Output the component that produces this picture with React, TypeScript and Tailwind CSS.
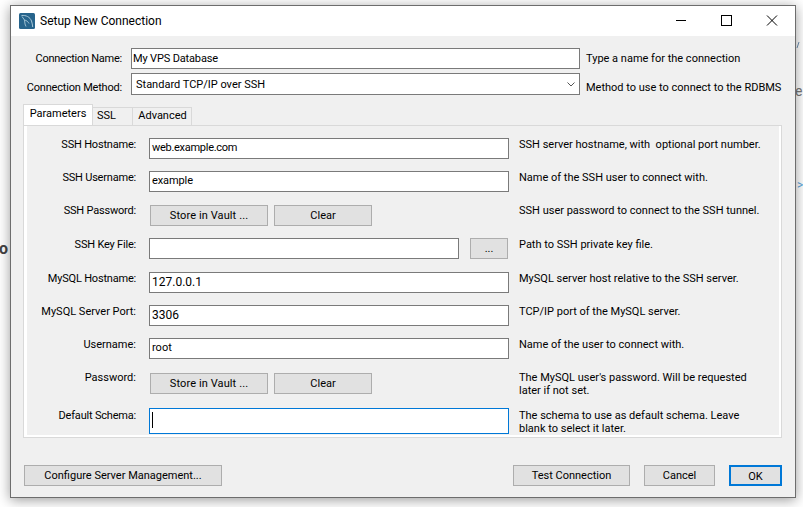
import React from "react";

function Field({ value, className = "pl-px" }: { value?: string; className?: string }) {
  return (
    <div className={`mt-px h-[21px] shrink-0 border border-[#7a7a7a] bg-white leading-[18px] whitespace-nowrap ${className}`}>
      {value}
    </div>
  );
}

function Btn({ children, className = "", border = "border border-[#adadad]" }: { children: React.ReactNode; className?: string; border?: string }) {
  return (
    <div className={`h-[21px] bg-[#e1e1e1] text-center leading-[20px] whitespace-nowrap ${border} ${className}`}>
      {children}
    </div>
  );
}

function Row({ label, help, top, children, labelClass = "tracking-[-0.2px]" }: { label: string; help: React.ReactNode; top: string; children: React.ReactNode; labelClass?: string }) {
  return (
    <div className={`flex items-start ${top}`}>
      <div className={`w-[109px] shrink-0 text-right leading-4 whitespace-nowrap ${labelClass}`}>{label}</div>
      <div className="ml-[13px] w-[360px] shrink-0">{children}</div>
      <div className="ml-[10px] leading-[13px] whitespace-pre pt-px">{help}</div>
    </div>
  );
}

function VaultButtons({ className = "mt-[2px]" }: { className?: string }) {
  return (
    <div className={`flex gap-[6px] pl-px ${className}`}>
      <Btn className="w-[118px] tracking-[0.1px]">Store in Vault ...</Btn>
      <Btn className="w-[98px]">Clear</Btn>
    </div>
  );
}

function Logo() {
  return (
    <svg viewBox="0 0 16 16" className="h-4 w-4 shrink-0">
      <rect width="16" height="16" rx="1.5" fill="#27648c" />
      <path d="M2.500 2.500c4.500-.5 8.500 1.500 10 5.500.6 1.800 1 4 1.200 6" stroke="#a9c8d8" strokeWidth="1" fill="none" />
      <path d="M3 3.500l2.500 3.500L6 11l1 2.500M5.500 7c2 .5 3.500 1.500 4.500 3.500" stroke="#a9c8d8" strokeWidth="0.9" fill="none" />
    </svg>
  );
}

export default function App() {
  return (
    <div className="relative h-[507px] w-[803px] overflow-hidden bg-white pl-[10px] pt-[5px] font-['Roboto',sans-serif] text-[11px] text-[#000]">
      <span className="absolute left-[-1px] top-[239px] text-[16px] font-bold leading-5 text-[#444]">o</span>
      <span className="absolute left-[795px] top-[83px] text-[14px] leading-4 text-[#777]">e</span>
      <span className="absolute left-[797px] top-[177px] text-[12px] leading-4 text-[#5aa5dc]">&gt;</span>
      <svg viewBox="0 0 4 6" className="absolute left-[796px] top-[42px] h-[6px] w-[4px]"><path d="M3 0L1 6" stroke="#6f93b5" /></svg>

      <div className="relative h-[493px] w-[786px] border border-[#6d6d6d] bg-[#f0f0f0] shadow-[0_2px_12px_rgba(0,0,0,0.4)]">
        <div className="flex h-[30px] items-center bg-white pl-[8px]">
          <Logo />
          <span className="ml-[5px] whitespace-nowrap text-[12px] leading-4">Setup New Connection</span>
          <div className="ml-auto flex items-center">
            <svg viewBox="0 0 46 30" className="h-[30px] w-[46px]"><path d="M19 14.500h10" stroke="#000" /></svg>
            <svg viewBox="0 0 46 30" className="h-[30px] w-[46px]"><rect x="18.500" y="9.500" width="10" height="10" fill="none" stroke="#000" /></svg>
            <svg viewBox="0 0 46 30" className="h-[30px] w-[46px]"><path d="M18 9.500l10 10M28 9.500l-10 10" stroke="#000" /></svg>
          </div>
        </div>

        <div className="flex items-start pt-[12px]">
          <div className="w-[111px] shrink-0 pt-[3px] text-right whitespace-nowrap leading-4 tracking-[-0.25px]">Connection Name:</div>
          <div className="ml-[9px] h-[21px] w-[449px] shrink-0 border border-[#7a7a7a] bg-white pl-px leading-[19px] tracking-[-0.15px] whitespace-nowrap">My VPS Database</div>
          <div className="ml-[6px] pt-[3px] whitespace-nowrap leading-4">Type a name for the connection</div>
        </div>

        <div className="mt-[4px] flex items-start">
          <div className="w-[111px] shrink-0 pt-[7px] text-right whitespace-nowrap leading-4 tracking-[-0.2px]">Connection Method:</div>
          <div className="relative ml-[9px] h-[22px] w-[449px] shrink-0 border border-[#7a7a7a] bg-white pl-[4px] leading-[21px]">
            Standard TCP/IP over SSH
            <svg viewBox="0 0 8 5" className="absolute right-[4px] top-[8px] h-[5px] w-[8px]"><path d="M0.500 0.500l3.500 3.500 3.500-3.500" stroke="#555" fill="none" /></svg>
          </div>
          <div className="ml-[6px] pt-[7px] whitespace-nowrap leading-4">Method to use to connect to the RDBMS</div>
        </div>

        <div className="ml-[12px] mt-[8px] flex h-[21px] items-end">
          <div className="relative z-10 flex h-[21px] w-[70px] items-center justify-center border border-b-0 border-[#d9d9d9] bg-white pb-[2px] leading-4">Parameters</div>
          <div className="flex h-[18px] w-[40px] items-center border-r border-t border-[#d9d9d9] pb-[2px] pl-[4px] leading-4">SSL</div>
          <div className="flex h-[18px] w-[59px] items-center justify-center border-r border-t border-[#d9d9d9] pb-[2px] pl-px leading-4">Advanced</div>
        </div>

        <div className="ml-[12px] h-[313px] w-[759px] border border-[#d9d9d9] bg-[#f0f0f0] px-[3px] pt-[11px] shadow-[inset_3px_0_0_#fff,inset_-2px_0_0_#fff,inset_0_-2px_0_#fff]">
          <Row label="SSH Hostname:" help="SSH server hostname, with  optional port number." top="">
            <Field value="web.example.com" className="pl-[2px] tracking-[-0.28px]" />
          </Row>
          <Row label="SSH Username:" help="Name of the SSH user to connect with." top="mt-[11px]">
            <Field value="example" className="pl-[2px] tracking-[-0.1px]" />
          </Row>
          <Row label="SSH Password:" help="SSH user password to connect to the SSH tunnel." top="mt-[11px]">
            <VaultButtons />
          </Row>
          <Row label="SSH Key File:" help="Path to SSH private key file." top="mt-[11px]">
            <div className="flex items-start">
              <Field className="w-[310px]" />
              <Btn className="ml-[11px] mt-px w-[38px]">...</Btn>
            </div>
          </Row>
          <Row label="MySQL Hostname:" help="MySQL server host relative to the SSH server." top="mt-[12px]">
            <Field value="127.0.0.1" className="pl-[2px] text-[12px]" />
          </Row>
          <Row label="MySQL Server Port:" help="TCP/IP port of the MySQL server." top="mt-[11px]" labelClass="">
            <Field value="3306" className="pl-[2px] text-[12px]" />
          </Row>
          <Row label="Username:" help="Name of the user to connect with." top="mt-[11px]" labelClass="">
            <Field value="root" className="pl-[2px]" />
          </Row>
          <Row label="Password:" help={<>The MySQL user's password. Will be requested{"\n"}later if not set.</>} top="mt-[11px]" labelClass="">
            <VaultButtons className="mt-[3px]" />
          </Row>
          <Row label="Default Schema:" help={<>The schema to use as default schema. Leave{"\n"}blank to select it later.</>} top="mt-[11px]">
            <div className="h-[26px] border border-[#0078d7] bg-white pl-[2px] pt-[3px]">
              <div className="h-[16px] w-px bg-black" />
            </div>
          </Row>
        </div>

        <div className="mt-[27px] flex items-start pl-[13px]">
          <Btn className="w-[198px]">Configure Server Management...</Btn>
          <Btn className="ml-[291px] w-[117px]">Test Connection</Btn>
          <Btn className="ml-[14px] w-[71px]">Cancel</Btn>
          <Btn className="ml-[14px] w-[53px] leading-[18px]" border="border-2 border-[#0078d7]">OK</Btn>
        </div>
      </div>
    </div>
  );
}
